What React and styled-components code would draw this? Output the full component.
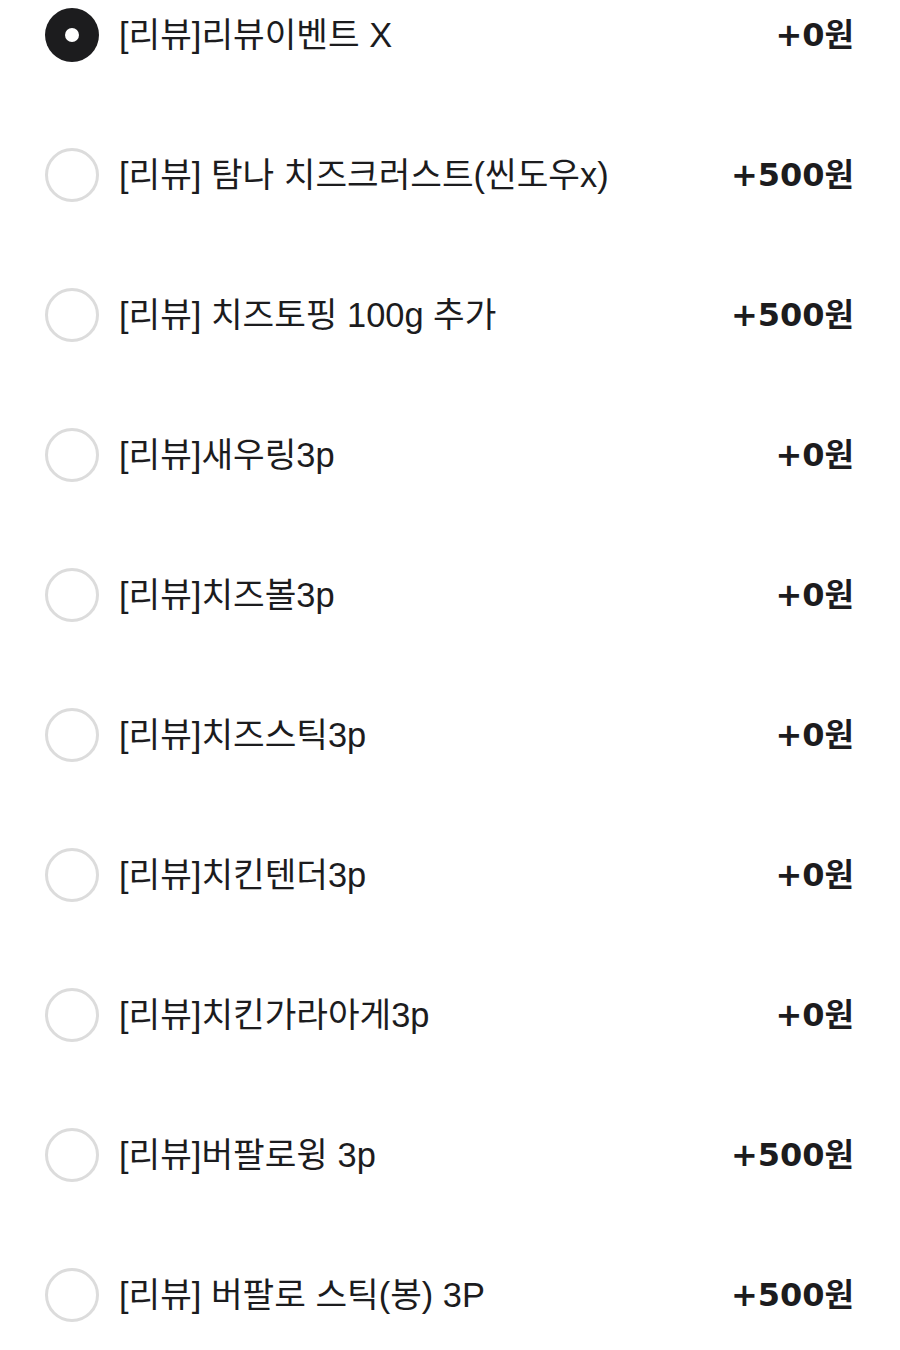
import React from "react";
import styled, { createGlobalStyle } from "styled-components";

const Global = createGlobalStyle`
  html, body { margin: 0; padding: 0; background: #fff; }
  body { font-family: "Liberation Sans", "Noto Sans CJK KR", sans-serif; color: #1c1c1e; }
`;

const List = styled.ul`
  list-style: none;
  margin: 0;
  padding: 8px 46px 0 45px;
  display: flex;
  flex-direction: column;
  gap: 86px;
`;

const Row = styled.li`
  display: flex;
  align-items: center;
  height: 54px;
`;

const Radio = styled.span`
  flex: none;
  box-sizing: border-box;
  width: 54px;
  height: 54px;
  border-radius: 50%;
  display: flex;
  align-items: center;
  justify-content: center;
  background: ${(p) => (p.$checked ? "#1c1c1e" : "#fff")};
  border: ${(p) => (p.$checked ? "none" : "3.5px solid #dcdcdc")};
  &::after {
    content: "";
    display: ${(p) => (p.$checked ? "block" : "none")};
    width: 14px;
    height: 14px;
    border-radius: 50%;
    background: #fff;
  }
`;

const Label = styled.span`
  flex: 1;
  margin-left: 20px;
  font-family: "Liberation Sans", "Noto Sans CJK KR", sans-serif;
  font-size: 34.4px;
  line-height: 54px;
  font-weight: 400;
  color: #1c1c1e;
  white-space: nowrap;
`;

const Price = styled.span`
  flex: none;
  font-family: "DejaVu Sans", "Noto Sans CJK KR", sans-serif;
  font-size: 32px;
  line-height: 54px;
  font-weight: 700;
  color: #1c1c1e;
`;

const items = [
  ["[리뷰]리뷰이벤트 X", "+0원", true],
  ["[리뷰] 탐나 치즈크러스트(씬도우x)", "+500원"],
  ["[리뷰] 치즈토핑 100g 추가", "+500원"],
  ["[리뷰]새우링3p", "+0원"],
  ["[리뷰]치즈볼3p", "+0원"],
  ["[리뷰]치즈스틱3p", "+0원"],
  ["[리뷰]치킨텐더3p", "+0원"],
  ["[리뷰]치킨가라아게3p", "+0원"],
  ["[리뷰]버팔로윙 3p", "+500원"],
  ["[리뷰] 버팔로 스틱(봉) 3P", "+500원"],
];

export default function App() {
  return (
    <>
      <Global />
      <List>
        {items.map(([label, price, checked]) => (
          <Row key={label}>
            <Radio $checked={!!checked} />
            <Label>{label}</Label>
            <Price>{price}</Price>
          </Row>
        ))}
      </List>
    </>
  );
}
